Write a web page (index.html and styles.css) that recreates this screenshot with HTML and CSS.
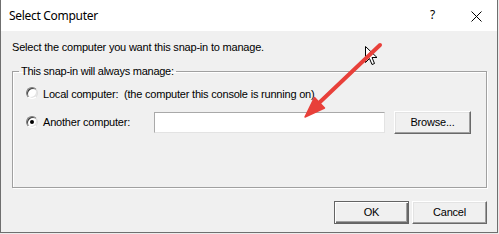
FILE: index.html
```html
<!DOCTYPE html>
<html>
<head>
<meta charset="utf-8">
<link rel="stylesheet" href="styles.css">
</head>
<body>
<div class="window">
  <div class="titlebar">
    <span class="title">Select Computer</span>
    <span class="help">?</span>
    <svg class="close" width="11" height="11" viewBox="0 0 11 11"><path d="M0.5 0.5 L10.5 10.5 M10.5 0.5 L0.5 10.5" stroke="#000" stroke-width="1" fill="none"/></svg>
  </div>
  <div class="content">
    <p class="prompt">Select the computer you want this snap-in to manage.</p>
    <fieldset class="group">
      <legend class="legend">This snap-in will always manage:</legend>
      <div class="row row-local">
        <span class="radio"></span>
        <span class="label">Local computer:&nbsp; (the computer this console is running on)</span>
      </div>
      <div class="row row-other">
        <span class="choice"><span class="radio checked"></span><span class="label">Another computer:</span></span>
        <span class="input"></span>
        <span class="btn browse">Browse...</span>
      </div>
    </fieldset>
    <div class="actions">
      <span class="btn default">OK</span>
      <span class="btn">Cancel</span>
    </div>
  </div>
  <svg class="overlay" width="498" height="233" viewBox="0 0 498 233">
    <path d="M365.5 46.5 L365.5 62.5 L369.5 58.5 L372 64.5 L374.5 63.5 L372 57.5 L377 57.5 Z" fill="#fff" stroke="#000" stroke-width="1" stroke-linejoin="miter"/>
    <line x1="380" y1="45" x2="320" y2="102" stroke="#e8403a" stroke-width="4" stroke-linecap="round"/>
    <polygon points="305,117 314.5,97.5 324.5,108" fill="#e8403a" stroke="#e8403a" stroke-width="1.5" stroke-linejoin="round"/>
  </svg>
</div>
</body>
</html>
```
FILE: styles.css
```css
html, body {
  margin: 0;
  padding: 0;
  background: #ececec;
}
.window {
  position: relative;
  width: 498px;
  height: 233px;
  box-sizing: border-box;
  border: 1px solid #6f6f6f;
  border-top: none;
  display: flex;
  flex-direction: column;
  background: #f0f0f0;
  font-family: "Liberation Sans", Arial, sans-serif;
  font-size: 11px;
  line-height: 13px;
  letter-spacing: -0.2px;
  color: #000;
}
.titlebar {
  height: 31px;
  flex: none;
  background: #fff;
  display: flex;
  align-items: center;
  padding: 0 15px 0 8px;
  font-family: "Noto Sans", "Segoe UI", sans-serif;
  font-size: 12px;
  line-height: 16px;
  letter-spacing: -0.3px;
}
.title {
  flex: 1;
}
.help {
  margin-right: 36px;
  margin-top: -1px;
}
.close {
  display: block;
  margin-top: 1px;
}
.content {
  flex: 1;
  padding: 10px 10px 0 11px;
  display: flex;
  flex-direction: column;
}
.prompt {
  margin: 0;
  padding-left: 0;
}
.group {
  margin: 11px 0 0 0;
  padding: 8px 13px 54px 13px;
  border: 1px solid #a0a0a0;
  box-shadow: 1px 1px 0 #fff, inset 1px 1px 0 #fff;
  min-width: 0;
}
.legend {
  margin-left: -7px;
  padding: 0 2px;
  line-height: 13px;
  letter-spacing: -0.25px;
}
.row {
  display: flex;
  align-items: center;
}
.row-local {
  height: 16px;
}
.row-other {
  margin-top: 10px;
  height: 21px;
}
.choice {
  display: flex;
  align-items: center;
  width: 128px;
  flex: none;
}
.radio {
  flex: none;
  width: 12px;
  height: 12px;
  box-sizing: border-box;
  border-radius: 50%;
  border: 1px solid;
  border-color: #7a7a7a #dcdcdc #ffffff #7a7a7a;
  background: #fff;
  box-shadow: inset 1px 1px 0 #404040, inset -1px -1px 0 #e3e3e3;
  margin-right: 5px;
  margin-top: -2px;
  display: flex;
  align-items: center;
  justify-content: center;
}
.radio.checked::after {
  content: "";
  width: 4px;
  height: 4px;
  border-radius: 50%;
  background: #000;
}
.input {
  flex: none;
  width: 231px;
  height: 21px;
  box-sizing: border-box;
  background: #fff;
  border: 1px solid;
  border-color: #a9a9a9 #e3e3e3 #e3e3e3 #a9a9a9;
}
.btn {
  display: flex;
  align-items: center;
  justify-content: center;
  width: 75px;
  height: 23px;
  box-sizing: border-box;
  flex: none;
  background: #f0f0f0;
  border: 1px solid;
  border-color: #ffffff #696969 #696969 #ffffff;
  box-shadow: inset -1px -1px 0 #a0a0a0, inset 1px 1px 0 #e3e3e3;
}
.browse {
  margin-left: 9px;
  width: 77px;
}
.actions {
  margin-top: 13px;
  display: flex;
  justify-content: flex-end;
  gap: 3px;
}
.btn.default {
  border-color: #646464;
  box-shadow: inset 1px 1px 0 #fff, inset -1px -1px 0 #696969, inset -2px -2px 0 #a0a0a0;
}
.overlay {
  position: absolute;
  left: -1px;
  top: 0;
  pointer-events: none;
}
```
